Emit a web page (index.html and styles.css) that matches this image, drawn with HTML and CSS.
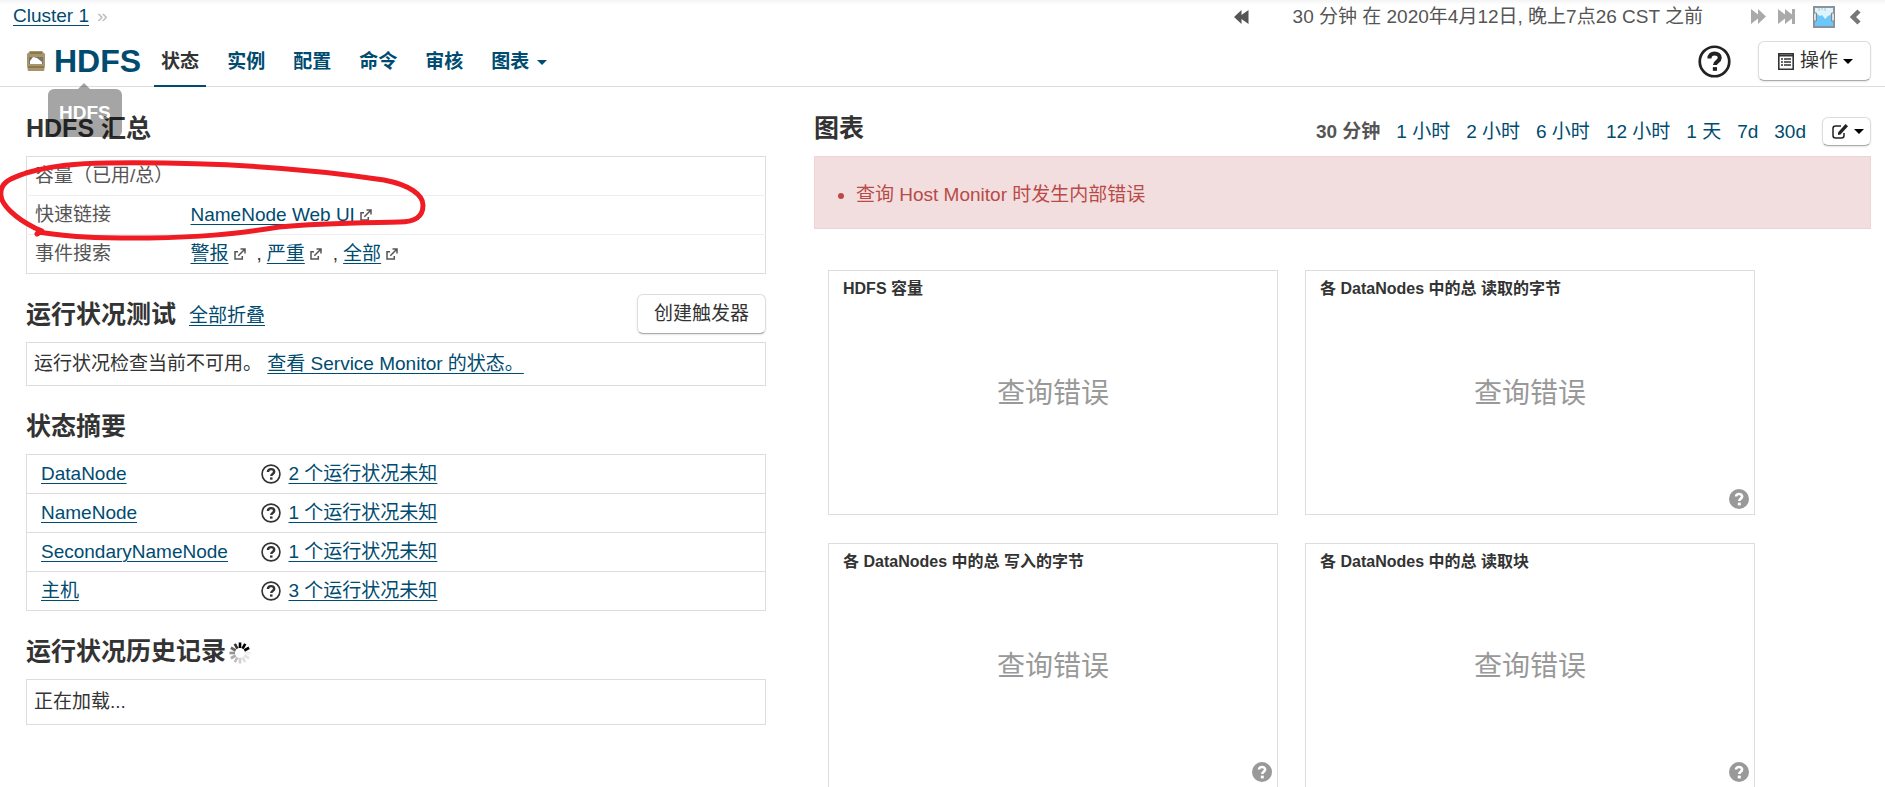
FILE: index.html
```html
<!DOCTYPE html>
<html lang="zh-CN">
<head>
<meta charset="utf-8">
<title>HDFS - Cluster 1</title>
<link rel="stylesheet" href="styles.css">
</head>
<body>
<svg class="sprite" aria-hidden="true">
  <symbol id="ext" viewBox="0 0 12 12"><path d="M4 3.700H1V11h7.300V8M6.500 1H11v4.500M11 1 4.300 7.700" fill="none" stroke="#555" stroke-width="1.500"/></symbol>
  <symbol id="ask" viewBox="0 0 34 34"><circle cx="17" cy="17" r="15.200" fill="#fff" stroke="currentColor" stroke-width="2.800"/><path d="M11.800 13.800c0-3.300 2.200-5.100 5.200-5.100s5.400 1.800 5.400 4.500c0 4-4.900 3.800-4.900 7.300" fill="none" stroke="currentColor" stroke-width="4.200"/><path d="M15.300 22.800h4.300v3.800h-4.300z" fill="currentColor"/></symbol>
  <symbol id="help" viewBox="0 0 20 20"><circle cx="10" cy="10" r="10" fill="#999"/><path d="M7 7.600C7 5.900 8.200 5 10 5s3.100 1 3.100 2.500c0 2.300-2.800 2.200-2.800 4.400" fill="none" stroke="#fff" stroke-width="2.600"/><path d="M8.800 13.600h3v2.800h-3z" fill="#fff"/></symbol>
</svg>
<header class="header">
  <div class="topbar">
    <nav class="crumbs"><a href="#">Cluster 1</a><span class="sep">»</span></nav>
    <div class="timebar">
      <button class="icon-btn back" aria-label="后退"><svg width="15" height="14" viewBox="0 0 15 14"><path d="M7.500 0v5l7-5v14l-7-5v5L0 7z" fill="#555"/></svg></button>
      <span class="time">30 分钟 在 2020年4月12日, 晚上7点26 CST 之前</span>
      <button class="icon-btn" aria-label="前进"><svg width="15" height="15" viewBox="0 0 15 15"><path d="M0 0l7 5.500V0l8 7.500-8 7.500V9.500L0 15z" fill="#aaa"/></svg></button>
      <button class="icon-btn end" aria-label="当前"><svg width="17" height="15" viewBox="0 0 17 15"><path d="M0 0l7 5.500V0l7 5.500V0h3v15h-3V9.500L7 15V9.500L0 15z" fill="#aaa"/></svg></button>
      <button class="icon-btn" aria-label="图像"><svg width="22" height="22" viewBox="0 0 22 22"><path d="M1 1h20v20H1z" fill="#6cc8fb"/><path d="M1 1h20v5l-4 3-2 1-3 3-3-4-2 1-3-2-3-2z" fill="#dff3fd"/><path d="M6 2v3M9 2v2M12 2v3" stroke="#a9c4d0"/><path d="M1 1h20v20H1z" fill="none" stroke="#8a9399" stroke-width="2"/><path d="M.5 7h3v8h-3zM18.500 7h3v8h-3z" fill="#ddd" stroke="#888"/></svg></button>
      <button class="icon-btn fold" aria-label="收起"><svg width="11" height="16" viewBox="0 0 11 16"><path d="M9 2 3 8l6 6" fill="none" stroke="#777" stroke-width="4.500"/></svg></button>
    </div>
  </div>
  <div class="navbar">
    <div class="service">
      <svg width="18" height="20" viewBox="0 0 18 20"><path d="M3 0h12l3 3v12l-1 5H1l-1-5V3z" fill="#a8956a"/><path d="M3 1h12v2H3z" fill="#8a784e"/><path d="M2 6h14v7H2z" fill="#777468"/><path d="M3 10l3-4 4 1 5 4v2H3z" fill="#fff"/><path d="M1 15h16v2H1z" fill="#8a784e"/></svg>
      <a href="#" class="name">HDFS</a>
      <div class="tooltip" role="tooltip">HDFS</div>
    </div>
    <nav class="tabs">
      <a href="#" class="tab active">状态</a><a href="#" class="tab">实例</a><a href="#" class="tab">配置</a><a href="#" class="tab">命令</a><a href="#" class="tab">审核</a><a href="#" class="tab">图表<span class="caret"></span></a>
    </nav>
    <button class="icon-btn ask" aria-label="帮助"><svg width="33" height="33"><use href="#ask"/></svg></button>
    <button class="btn actions"><svg width="16" height="17" viewBox="0 0 16 17"><path d="M.8.8h14.400v15.400H.8z" fill="#fff" stroke="#333" stroke-width="1.600"/><path d="M1 2.500h14" stroke="#333" stroke-width="2"/><path d="M3 6h2M3 9h2M3 12h2M6 6h7M6 9h7M6 12h7" stroke="#333" stroke-width="1.500"/></svg>操作<span class="caret"></span></button>
  </div>
</header>
<main class="main">
  <div class="left">
    <section>
      <div class="head"><h2>HDFS 汇总</h2></div>
      <div class="summary">
        <table class="grid info">
          <tr><th scope="row">容量（已用/总）</th><td></td></tr>
          <tr><th scope="row">快速链接</th><td><a href="#">NameNode Web UI</a><svg class="ext"><use href="#ext"/></svg></td></tr>
          <tr><th scope="row">事件搜索</th><td><a href="#">警报</a><svg class="ext"><use href="#ext"/></svg><span class="comma">,</span><a href="#">严重</a><svg class="ext"><use href="#ext"/></svg><span class="comma">,</span><a href="#">全部</a><svg class="ext"><use href="#ext"/></svg></td></tr>
        </table>
        <svg class="mark" viewBox="0 0 426 78" aria-hidden="true"><path d="M37 72 42 69 35 66C15 56 2 43 1 34-1 19 13 16 26 11 50 4 80 1 108 1c90-1 190 4 276 17 26 5 39 15 39 25 0 12-8 17-24 17-50 1-80 1-120 5-50 8-80 10-130 11-45 0-75 0-111-6" fill="none" stroke="#ef1c24" stroke-width="5" stroke-linejoin="round" stroke-linecap="round"/></svg>
      </div>
    </section>
    <section>
      <div class="head"><h2>运行状况测试</h2><a href="#" class="collapse">全部折叠</a><button class="btn trigger">创建触发器</button></div>
      <div class="panel">运行状况检查当前不可用。 <a href="#">查看 Service Monitor 的状态。</a></div>
    </section>
    <section>
      <div class="head"><h2>状态摘要</h2></div>
      <table class="grid status">
        <tr><th scope="row"><a href="#">DataNode</a></th><td><svg class="q"><use href="#ask"/></svg><a href="#">2 个运行状况未知</a></td></tr>
        <tr><th scope="row"><a href="#">NameNode</a></th><td><svg class="q"><use href="#ask"/></svg><a href="#">1 个运行状况未知</a></td></tr>
        <tr><th scope="row"><a href="#">SecondaryNameNode</a></th><td><svg class="q"><use href="#ask"/></svg><a href="#">1 个运行状况未知</a></td></tr>
        <tr><th scope="row"><a href="#">主机</a></th><td><svg class="q"><use href="#ask"/></svg><a href="#">3 个运行状况未知</a></td></tr>
      </table>
    </section>
    <section>
      <div class="head"><h2>运行状况历史记录</h2>
        <svg class="spin" width="22" height="22" viewBox="-11 -11 22 22" stroke-width="2.600" stroke="#000"><path d="M0-5v-5.500"/><path d="M0-5v-5.500" transform="rotate(30)"/><path d="M0-5v-5.500" transform="rotate(60)"/><path d="M0-5v-5.500" transform="rotate(90)" opacity=".06"/><path d="M0-5v-5.500" transform="rotate(120)" opacity=".1"/><path d="M0-5v-5.500" transform="rotate(150)" opacity=".12"/><path d="M0-5v-5.500" transform="rotate(180)" opacity=".18"/><path d="M0-5v-5.500" transform="rotate(210)" opacity=".25"/><path d="M0-5v-5.500" transform="rotate(240)" opacity=".32"/><path d="M0-5v-5.500" transform="rotate(270)" opacity=".42"/><path d="M0-5v-5.500" transform="rotate(300)" opacity=".6"/><path d="M0-5v-5.500" transform="rotate(330)" opacity=".8"/></svg>
      </div>
      <div class="panel loading">正在加载...</div>
    </section>
  </div>
  <section class="right">
    <div class="head"><h2>图表</h2>
      <div class="ranges"><strong>30 分钟</strong><a href="#">1 小时</a><a href="#">2 小时</a><a href="#">6 小时</a><a href="#">12 小时</a><a href="#">1 天</a><a href="#">7d</a><a href="#">30d</a>
        <button class="btn edit" aria-label="编辑"><svg width="17" height="15" viewBox="0 0 17 15"><path d="M9 2H3.500Q1 2 1 4.500v7Q1 14 3.500 14h6Q12 14 12 11.500V9" fill="none" stroke="#222" stroke-width="1.500"/><path d="M6 11V8.500L13.500 0 16 2.200 8.500 10.500z" fill="#222"/></svg><span class="caret"></span></button>
      </div>
    </div>
    <ul class="alert"><li>查询 Host Monitor 时发生内部错误</li></ul>
    <div class="charts">
      <article class="card"><h3>HDFS 容量</h3><p>查询错误</p></article>
      <article class="card"><h3>各 DataNodes 中的总 读取的字节</h3><p>查询错误</p><svg class="help"><use href="#help"/></svg></article>
      <article class="card"><h3>各 DataNodes 中的总 写入的字节</h3><p>查询错误</p><svg class="help"><use href="#help"/></svg></article>
      <article class="card"><h3>各 DataNodes 中的总 读取块</h3><p>查询错误</p><svg class="help"><use href="#help"/></svg></article>
    </div>
  </section>
</main>
</body>
</html>
```
FILE: styles.css
```css
* { box-sizing: border-box; }
body {
  margin: 0;
  height: 100vh;
  overflow: hidden;
  background: #fff;
  color: #333;
  font: 19px/26px "Liberation Sans", "Noto Sans CJK SC", sans-serif;
}
a { color: #004b70; text-underline-offset: 3px; text-decoration-thickness: 1px; }
h2, h3, p, ul { margin: 0; padding: 0; }
button { font: inherit; color: inherit; cursor: pointer; }
.sprite { position: absolute; width: 0; height: 0; }

.header { border-bottom: 1px solid #ddd; }
.topbar {
  display: flex;
  justify-content: space-between;
  height: 30px;
  padding: 3px 24px 0 13px;
  background: linear-gradient(#f4f4f4, #fff 5px);
}
.sep { margin-left: 8px; color: #bbb; }
.timebar { display: flex; align-items: center; color: #555; }
.icon-btn { display: flex; padding: 0; border: 0; background: none; }
.back { margin-right: 44px; }
.time { margin-right: 48px; }
.end { margin: 0 18px 0 12px; }
.fold { margin-left: 15px; }

.navbar { display: flex; align-items: center; height: 56px; padding: 6px 14px 0 27px; }
.service { position: relative; display: flex; align-items: center; gap: 9px; }
.name { font-size: 32px; line-height: 40px; font-weight: bold; text-decoration: none; }
.tooltip {
  position: absolute;
  top: 48px;
  left: 21px;
  padding: 11px;
  border-radius: 6px;
  background: #000;
  color: #fff;
  font-weight: bold;
  opacity: .35;
}
.tooltip::before {
  content: "";
  position: absolute;
  left: 30px;
  bottom: 100%;
  border: solid transparent;
  border-width: 0 6px 6px;
  border-bottom-color: #000;
}
.tabs { display: flex; gap: 14px; margin: 0 auto 0 13px; }
.tab {
  display: flex;
  align-items: center;
  height: 52px;
  padding: 4px 7px 0;
  border-bottom: 2px solid transparent;
  font-weight: bold;
  text-decoration: none;
}
.active { color: #333; border-color: #004b70; }
.caret { border: solid transparent; border-width: 5px 5px 0; border-top-color: currentColor; margin-left: 8px; }
.ask { margin-right: 27px; color: #222; }
.btn {
  display: flex;
  align-items: center;
  border: 1px solid #ddd;
  border-bottom-color: #aaa;
  border-radius: 6px;
  background: #fff;
  box-shadow: 0 1px 2px rgba(0, 0, 0, .1);
}
.actions { height: 40px; padding: 0 17px 0 19px; }
.actions svg { margin-right: 6px; }
.btn .caret { margin-left: 5px; border-top-color: #000; }

.main { display: grid; grid-template-columns: 740fr 1057fr; gap: 48px; padding: 23px 14px 0 26px; }
.head { display: flex; align-items: center; height: 46px; padding-bottom: 10px; }
h2 { font-size: 25px; line-height: 36px; }
.left section { margin-bottom: 22px; }
.grid { width: 100%; border-collapse: collapse; table-layout: fixed; border: 1px solid #ddd; }
.grid th { font-weight: normal; text-align: left; }
.grid th, .grid td { height: 39px; padding: 0; }
.info tr + tr { border-top: 1px solid #eee; }
.info th { width: 164px; padding-left: 8px; color: #555; }
.status tr + tr { border-top: 1px solid #ddd; }
.status th { width: 234px; padding-left: 14px; }
.summary { position: relative; }
.mark { position: absolute; top: 6px; left: -26px; width: 426px; height: 78px; pointer-events: none; overflow: visible; }
.ext { width: 12px; height: 12px; margin-left: 5px; }
.comma { margin: 0 5px 0 11px; }
.q { width: 20px; height: 20px; margin-right: 8px; vertical-align: -4px; color: #333; }
.collapse { margin: 4px 0 0 13px; }
.trigger { height: 40px; margin-left: auto; padding: 0 16px; }
.panel { padding: 8px 7px; border: 1px solid #ddd; }
.loading { padding: 9px 7px; }
.spin { margin: 4px 0 0 3px; }

.ranges { display: flex; align-items: center; gap: 16px; margin: 7px 0 0 auto; color: #555; }
.ranges a { text-decoration: none; }
.edit { height: 29px; padding: 0 6px 0 9px; }
.alert { padding: 25px 41px 20px; border: 1px solid #eed3d7; background: #f2dede; color: #b94a48; }
.charts { display: grid; grid-template-columns: repeat(2, minmax(0, 450px)); gap: 28px 27px; padding: 41px 14px; }
.card { position: relative; display: flex; flex-direction: column; height: 245px; padding: 6px 14px; border: 1px solid #ddd; }
h3 { font-size: 16px; line-height: 24px; }
.card p { margin: 61px 0; color: #999; font-size: 28px; line-height: 64px; text-align: center; }
.help { position: absolute; right: 5px; bottom: 5px; width: 20px; height: 20px; }
```
